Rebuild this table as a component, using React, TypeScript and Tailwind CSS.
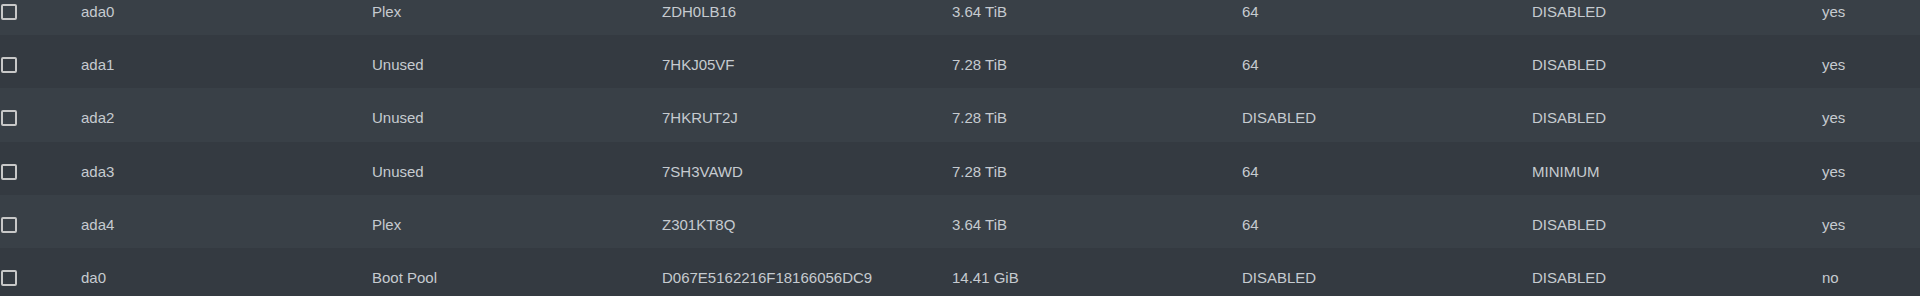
const disks = [
  { name: "ada0", pool: "Plex", serial: "ZDH0LB16", size: "3.64 TiB", standby: "64", apm: "DISABLED", smart: "yes" },
  { name: "ada1", pool: "Unused", serial: "7HKJ05VF", size: "7.28 TiB", standby: "64", apm: "DISABLED", smart: "yes" },
  { name: "ada2", pool: "Unused", serial: "7HKRUT2J", size: "7.28 TiB", standby: "DISABLED", apm: "DISABLED", smart: "yes" },
  { name: "ada3", pool: "Unused", serial: "7SH3VAWD", size: "7.28 TiB", standby: "64", apm: "MINIMUM", smart: "yes" },
  { name: "ada4", pool: "Plex", serial: "Z301KT8Q", size: "3.64 TiB", standby: "64", apm: "DISABLED", smart: "yes" },
  { name: "da0", pool: "Boot Pool", serial: "D067E5162216F18166056DC9", size: "14.41 GiB", standby: "DISABLED", apm: "DISABLED", smart: "no" },
];

function App() {
  return (
    <div
      className="h-[296px] w-[1920px] overflow-hidden bg-[#343a41] text-[15px] text-[#c6cbd0]"
      style={{ fontFamily: '"Liberation Sans", Arial, sans-serif' }}
    >
      <div className="-mt-[18.33px]">
        {disks.map((disk, i) => (
          <div
            key={disk.name}
            className={
              "flex h-[53.33px] items-center pt-[7px] " +
              (i % 2 === 0 ? "bg-[#394047]" : "bg-[#343a41]")
            }
          >
            <div className="w-[81px] pl-[1px]">
              <div className="h-[16px] w-[16px] rounded-[2px] border-2 border-[#c8c8c8]" />
            </div>
            <div className="w-[291px]">{disk.name}</div>
            <div className="w-[290px]">{disk.pool}</div>
            <div className="w-[290px]">{disk.serial}</div>
            <div className="w-[290px]">{disk.size}</div>
            <div className="w-[290px]">{disk.standby}</div>
            <div className="w-[290px]">{disk.apm}</div>
            <div className="flex-1">{disk.smart}</div>
          </div>
        ))}
      </div>
    </div>
  );
}

export default App;
